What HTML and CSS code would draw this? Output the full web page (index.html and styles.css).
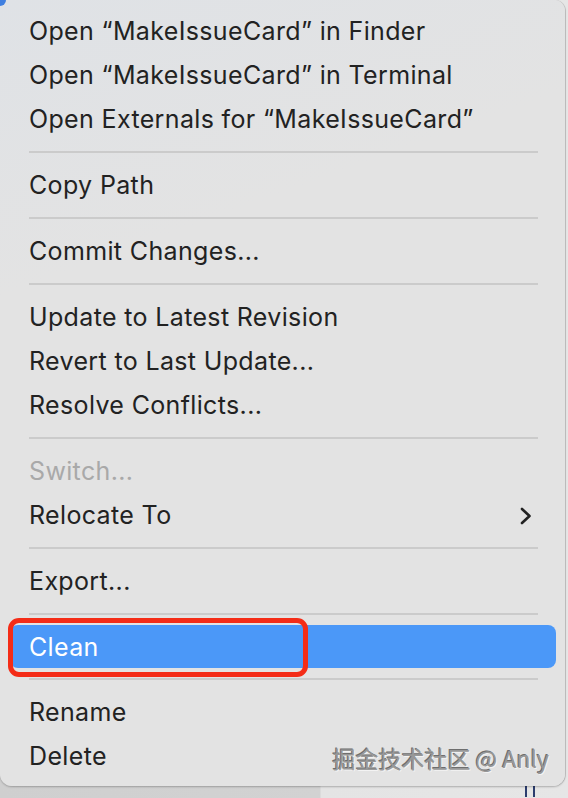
FILE: index.html
```html
<!DOCTYPE html>
<html lang="en">
<head>
    <meta charset="UTF-8">
    <title>Context Menu</title>
    <link rel="stylesheet" href="styles.css">
</head>
<body>
    <div class="menu">
        <div class="item">Open “MakeIssueCard” in Finder</div>
        <div class="item">Open “MakeIssueCard” in Terminal</div>
        <div class="item">Open Externals for “MakeIssueCard”</div>
        <div class="sep"></div>
        <div class="item">Copy Path</div>
        <div class="sep"></div>
        <div class="item">Commit Changes...</div>
        <div class="sep"></div>
        <div class="item">Update to Latest Revision</div>
        <div class="item">Revert to Last Update...</div>
        <div class="item">Resolve Conflicts...</div>
        <div class="sep"></div>
        <div class="item disabled">Switch...</div>
        <div class="item">
            <span>Relocate To</span>
            <svg class="chevron" width="12" height="18" viewBox="0 0 12 18">
                <path d="M2 2 L9.5 9 L2 16" fill="none" stroke="#222" stroke-width="2.6" stroke-linecap="round" stroke-linejoin="round"/>
            </svg>
        </div>
        <div class="sep"></div>
        <div class="item">Export...</div>
        <div class="sep"></div>
        <div class="item active">
            Clean
            <div class="callout"></div>
        </div>
        <div class="sep"></div>
        <div class="item">Rename</div>
        <div class="item">Delete</div>

        <div class="watermark">掘金技术社区 @ Anly</div>
    </div>
    <div class="below">
        <div class="bars"></div>
    </div>
</body>
</html>
```

FILE: styles.css
```css
html, body {
    margin: 0;
    padding: 0;
}

body {
    width: 568px;
    height: 798px;
    overflow: hidden;
    background: linear-gradient(to right, #cfcfcf 0, #d2d2d2 320px, #e4e4e4 321px, #e6e6e6 100%);
    font-family: Inter, "Noto Sans", sans-serif;
    position: relative;
}

.menu {
    position: relative;
    width: 565px;
    padding: 9px 0 8px;
    background: linear-gradient(160deg, #dfe2e6 0, #e3e3e3 30%, #e3e3e3 100%);
    border-radius: 0 11px 12px 12px;
    box-shadow: 0 1px 2px rgba(0, 0, 0, 0.25), 1px 0 0 #c9c9c9;
    z-index: 1;
}

.menu::before {
    content: "";
    position: absolute;
    top: -6px;
    left: -6px;
    width: 12px;
    height: 12px;
    border-radius: 50%;
    background: #3f7fe0;
}

.item {
    position: relative;
    height: 44px;
    display: flex;
    align-items: center;
    justify-content: space-between;
    padding: 0 33px 0 29px;
    font-size: 25px;
    letter-spacing: 0.35px;
    color: #222222;
}

.item.disabled {
    color: #a9a9a9;
}

.item.active {
    margin: 0 9px 0 10px;
    padding-left: 19px;
    height: 43px;
    background: #4b98f8;
    color: #ffffff;
    border-radius: 8px;
}

.chevron {
    margin-top: 1px;
}

.callout {
    position: absolute;
    left: -2px;
    top: -7px;
    width: 290px;
    height: 49px;
    border: 5px solid #f42c17;
    border-radius: 11px;
}

.sep {
    height: 2px;
    margin: 10px 27px 10px 29px;
    background: #cbcbcb;
}

.watermark {
    position: absolute;
    right: 16px;
    bottom: 11px;
    font-family: "Noto Sans CJK SC", sans-serif;
    font-size: 23px;
    color: #8c8c8c;
    text-shadow: -1px -1px 0 #5a5a5a, 1px 1px 0 #f6f6f6;
    opacity: 0.85;
}

.below {
    height: 11px;
    position: relative;
}

.bars {
    position: absolute;
    left: 525px;
    top: 0;
    width: 10px;
    height: 11px;
    border-left: 2px solid #2c3d6e;
    border-right: 2px solid #2c3d6e;
    box-sizing: border-box;
}
```
